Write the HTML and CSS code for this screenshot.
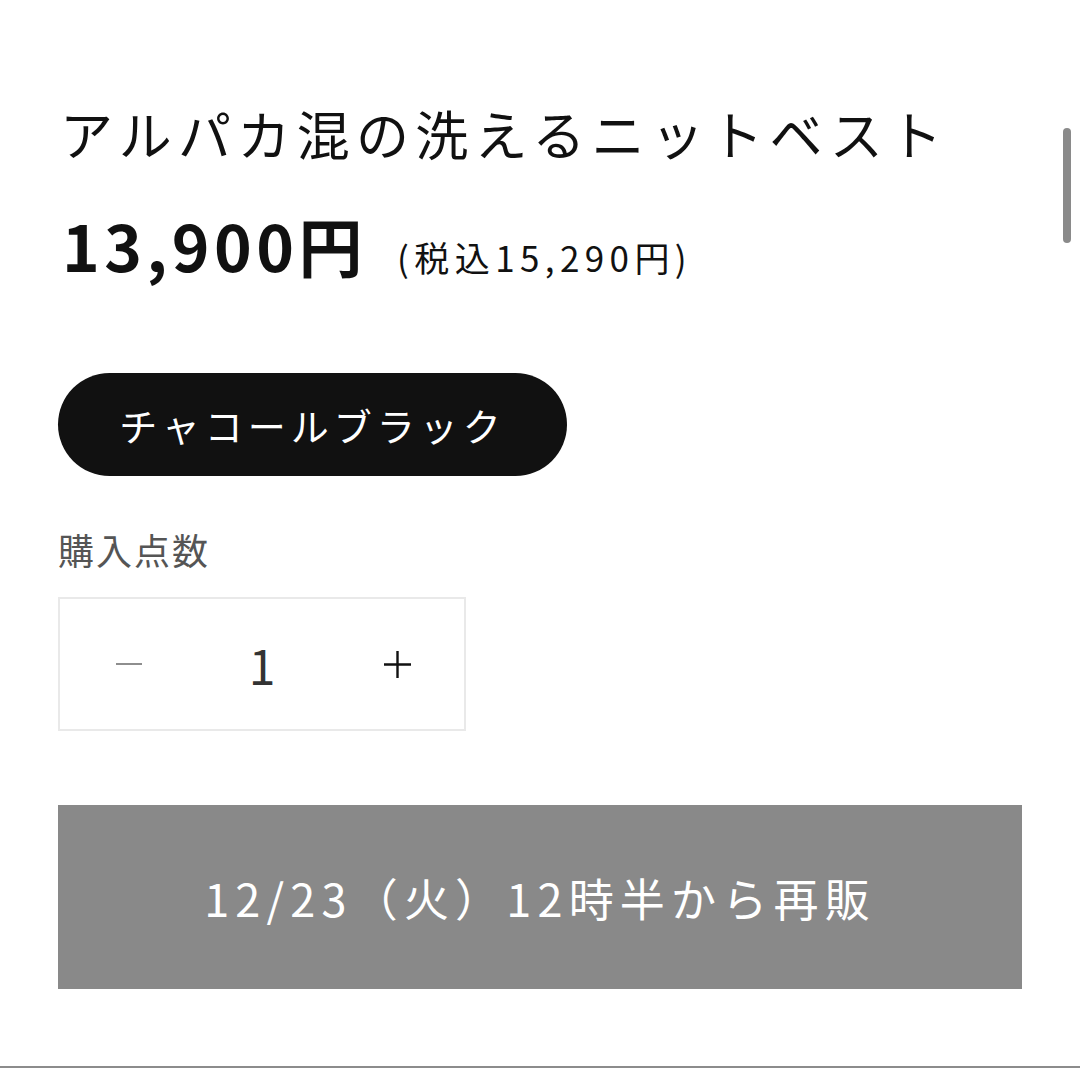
FILE: index.html
```html
<!DOCTYPE html>
<html lang="ja">

<head>
    <meta charset="UTF-8">
    <meta name="viewport" content="width=device-width, initial-scale=1.0">
    <title>アルパカ混の洗えるニットベスト</title>
    <link rel="stylesheet" href="styles.css">
</head>

<body>
    <div class="product">
        <h1 class="product-title">アルパカ混の洗えるニットベスト</h1>

        <div class="price-row">
            <span class="price">13,900円</span>
            <span class="price-tax">(税込15,290円)</span>
        </div>

        <!-- カラー選択 -->
        <div class="color-list">
            <button class="color-pill">チャコールブラック</button>
        </div>

        <div class="qty-label">購入点数</div>
        <div class="qty-box">
            <span class="qty-btn qty-minus">
                <svg width="26" height="26" viewBox="0 0 26 26"><path d="M0 13H26" stroke="#8e8e8e" stroke-width="2" /></svg>
            </span>
            <span class="qty-value">1</span>
            <span class="qty-btn qty-plus">
                <svg width="27" height="27" viewBox="0 0 27 27"><path d="M0 13.5H27M13.5 0V27" stroke="#111" stroke-width="2.4" /></svg>
            </span>
        </div>

        <button class="restock-btn">12/23（火）12時半から再販</button>
    </div>

    <div class="scroll-thumb"></div>
</body>

</html>
```

FILE: styles.css
```css
body {
    margin: 0;
    background-color: #fff;
    color: #111;
    font-family: "Noto Sans CJK JP", "Noto Sans", sans-serif;
    height: 1069px;
    overflow: hidden;
    position: relative;
}

.product {
    padding: 100px 58px 0 58px;
    height: 966px;
    border-bottom: 2px solid #8c8c8c;
}

.product-title {
    margin: 0 0 0 2px;
    font-size: 53px;
    font-weight: 400;
    letter-spacing: 6.3px;
    line-height: 66px;
}

.price-row {
    display: flex;
    align-items: baseline;
    margin-top: 38px;
}

.price {
    font-size: 64px;
    font-weight: 700;
    letter-spacing: 4.5px;
    line-height: 80px;
    margin-left: 4px;
}

.price-tax {
    font-size: 35px;
    letter-spacing: 5.4px;
    margin-left: 30px;
}

.color-list {
    margin-top: 89px;
}

.color-pill {
    width: 509px;
    height: 103px;
    border: none;
    border-radius: 52px;
    background-color: #111;
    color: #fff;
    font-family: inherit;
    font-size: 38px;
    letter-spacing: 5px;
    padding: 0;
}

.qty-label {
    margin-top: 51px;
    font-size: 36px;
    letter-spacing: 2px;
    color: #555;
    line-height: 44px;
}

.qty-box {
    box-sizing: border-box;
    margin-top: 26px;
    width: 408px;
    height: 134px;
    border: 2px solid #e9e9e9;
    display: grid;
    grid-template-columns: 1fr 1fr 1fr;
    align-items: center;
    justify-items: center;
}

.qty-btn {
    display: flex;
}

.qty-minus {
    margin-left: 4px;
}

.qty-plus {
    margin-left: 2px;
}

.qty-value {
    font-size: 48px;
    color: #333;
    line-height: 1;
}

.restock-btn {
    display: block;
    margin-top: 74px;
    width: 964px;
    height: 184px;
    border: none;
    background-color: #898989;
    color: #fff;
    font-family: inherit;
    font-size: 45px;
    letter-spacing: 6.2px;
    padding: 0;
}

.scroll-thumb {
    position: absolute;
    top: 128px;
    right: 9px;
    width: 8px;
    height: 115px;
    border-radius: 4px;
    background-color: #8a8a8a;
}
```
